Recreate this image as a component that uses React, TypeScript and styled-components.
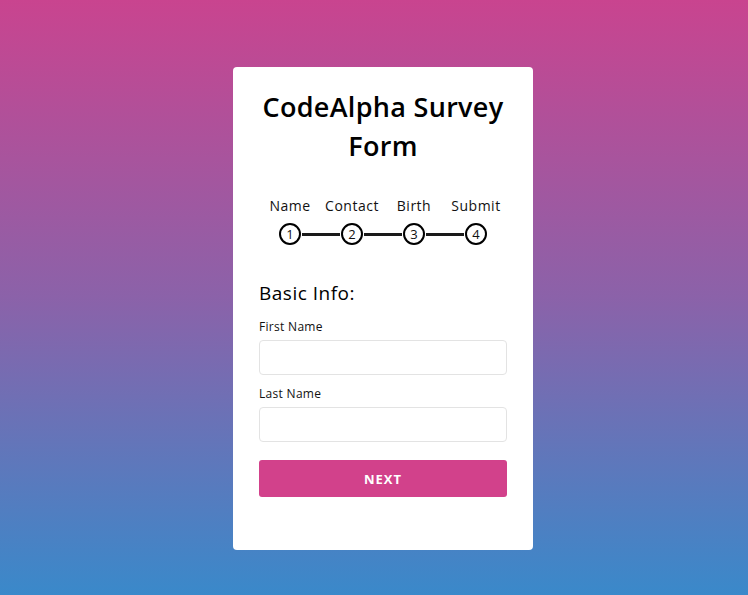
import React from "react";
import styled, { createGlobalStyle } from "styled-components";

const Global = createGlobalStyle`
  html, body { margin: 0; padding: 0; }
  body {
    font-family: "Open Sans", "Noto Sans", sans-serif;
    background: linear-gradient(180deg, #c9448f 0%, #8b62a9 50%, #3a89ca 100%);
    min-height: 595px;
    color: #111;
  }
`;

const Page = styled.div`
  min-height: 595px;
  box-sizing: border-box;
  display: flex;
  justify-content: center;
  align-items: flex-start;
  padding: 67px 0 0 18px;
`;

const Card = styled.div`
  width: 300px;
  box-sizing: border-box;
  background: #fff;
  border-radius: 4px;
  padding: 20px 26px 53px;
  display: flex;
  flex-direction: column;
`;

const Title = styled.h1`
  margin: 0;
  font-family: "Open Sans", sans-serif;
  font-weight: 600;
  font-size: 27px;
  letter-spacing: 0.3px;
  line-height: 39px;
  text-align: center;
  color: #000;
`;

const Steps = styled.div`
  margin-top: 31px;
  display: flex;
  flex-direction: column;
  gap: 7px;
`;

const Labels = styled.div`
  display: grid;
  grid-template-columns: repeat(4, 1fr);
`;

const StepLabel = styled.span`
  text-align: center;
  font-size: 14px;
  letter-spacing: 0.5px;
  line-height: 20px;
  color: #111;
`;

const Track = styled.div`
  display: flex;
  align-items: center;
  padding: 0 20px;
`;

const Circle = styled.span`
  width: 22px;
  height: 22px;
  box-sizing: border-box;
  border: 2px solid #000;
  border-radius: 50%;
  display: flex;
  align-items: center;
  justify-content: center;
  font-size: 13px;
  line-height: 1;
  color: #111;
  flex: none;
`;

const Connector = styled.span`
  flex: 1;
  height: 3px;
  margin: 0 1px;
  background: #1a1a1a;
`;

const SectionTitle = styled.h2`
  margin: 35px 0 0;
  font-weight: 400;
  font-size: 19px;
  letter-spacing: 0.5px;
  line-height: 27px;
  color: #000;
`;

const Field = styled.label<{ $first?: boolean }>`
  display: flex;
  flex-direction: column;
  gap: 4px;
  margin-top: ${(p) => (p.$first ? "11px" : "10px")};
`;

const FieldLabel = styled.span`
  font-size: 12px;
  letter-spacing: 0.3px;
  line-height: 18px;
  color: #111;
`;

const Input = styled.input`
  height: 35px;
  box-sizing: border-box;
  border: 1px solid #e3e3e3;
  border-radius: 4px;
  background: #fff;
  outline: none;
  padding: 0 10px;
  font: inherit;
`;

const Button = styled.button`
  margin-top: 18px;
  height: 37px;
  border: none;
  border-radius: 3px;
  background: #d2418b;
  color: #fff;
  font-family: "Open Sans", sans-serif;
  font-weight: 700;
  font-size: 13px;
  letter-spacing: 1px;
  cursor: pointer;
`;

const steps = ["Name", "Contact", "Birth", "Submit"];

export default function App() {
  return (
    <>
      <Global />
      <Page>
        <Card>
          <Title>CodeAlpha Survey Form</Title>
          <Steps>
            <Labels>
              {steps.map((s) => (
                <StepLabel key={s}>{s}</StepLabel>
              ))}
            </Labels>
            <Track>
              {steps.map((s, i) => (
                <React.Fragment key={s}>
                  {i > 0 && <Connector />}
                  <Circle>{i + 1}</Circle>
                </React.Fragment>
              ))}
            </Track>
          </Steps>
          <SectionTitle>Basic Info:</SectionTitle>
          <Field $first>
            <FieldLabel>First Name</FieldLabel>
            <Input type="text" />
          </Field>
          <Field>
            <FieldLabel>Last Name</FieldLabel>
            <Input type="text" />
          </Field>
          <Button type="button">NEXT</Button>
        </Card>
      </Page>
    </>
  );
}
